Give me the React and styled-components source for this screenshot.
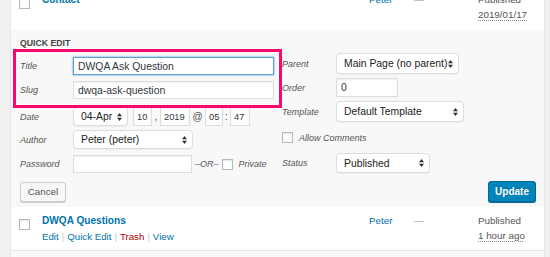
import React from "react";
import styled, { createGlobalStyle } from "styled-components";

const GlobalStyle = createGlobalStyle`
  html, body {
    margin: 0;
    padding: 0;
    background: #f1f1f1;
    font-family: "Liberation Sans", Arial, sans-serif;
    color: #32373c;
  }
  * {
    box-sizing: border-box;
  }
`;

const Viewport = styled.div`
  width: 550px;
  height: 257px;
  overflow: hidden;
  padding: 0 5px 0 10px;
`;

const Table = styled.div`
  background: #fff;
  border-left: 1px solid #e5e5e5;
  border-right: 1px solid #e5e5e5;
`;

const PostRow = styled.div`
  display: grid;
  grid-template-columns: 31px 327px 45px 64px 1fr;
  height: ${(p) => p.$h || 44}px;
  background: ${(p) => (p.$alt ? "#f9f9f9" : "#fff")};
  border-bottom: ${(p) => (p.$line ? "1px solid #e5e5e5" : "none")};
`;

const ScrolledRow = styled(PostRow)`
  margin-top: -14px;
`;

const CheckCell = styled.div`
  padding: 9px 0 0 8px;
`;

const Check = styled.span`
  display: inline-block;
  width: 11px;
  height: 11px;
  border: 1px solid #b4b9be;
  background: #fff;
  box-shadow: inset 0 1px 2px rgba(0, 0, 0, 0.1);
  flex: none;
`;

const TitleCell = styled.div`
  padding-top: 7px;
`;

const PostTitle = styled.a`
  display: block;
  font-size: 10.1px;
  font-weight: bold;
  line-height: 14px;
  color: #0073aa;
  text-decoration: none;
`;

const RowActions = styled.div`
  margin-top: 2px;
  font-size: 9.7px;
  line-height: 14px;
  color: #ddd;
`;

const ActionLink = styled.a`
  color: ${(p) => (p.$danger ? "#a00" : "#0073aa")};
  text-decoration: none;
`;

const Pipe = styled.span`
  color: #ccc;
  margin: 0 3px;
`;

const TextCell = styled.div`
  padding-top: 6px;
  font-size: 9.8px;
  line-height: 15px;
  color: ${(p) => p.$color || "#555"};
`;

const When = styled.abbr`
  text-decoration: underline dotted #888;
  text-underline-offset: 2px;
`;

const QuickEdit = styled.div`
  background: #f8f8f8;
  padding: 7px 8px 5px 9px;
`;

const Heading = styled.div`
  font-size: 8.7px;
  font-weight: bold;
  line-height: 12px;
  color: #444;
  text-transform: uppercase;
`;

const Columns = styled.div`
  display: flex;
  gap: 8px;
  margin-top: 4px;
`;

const LeftCol = styled.div`
  width: 254px;
  padding-top: 4px;
`;

const RightCol = styled.div`
  flex: 1;
`;

const Highlight = styled.div`
  position: relative;
  margin-bottom: 8px;

  &::after {
    content: "";
    position: absolute;
    top: -8px;
    left: -7px;
    right: -8px;
    bottom: -9px;
    border: 3px solid #f7086c;
    pointer-events: none;
  }
`;

const Field = styled.div`
  display: flex;
  align-items: center;
  height: ${(p) => p.$h}px;
  margin-bottom: ${(p) => p.$mb || 0}px;
`;

const Label = styled.span`
  width: ${(p) => p.$w || 53}px;
  flex: none;
  font-size: 9px;
  font-style: italic;
  color: #555;
`;

const TextInput = styled.input`
  width: ${(p) => p.$w}px;
  height: 100%;
  margin: 0;
  padding: ${(p) => (p.$small ? "0 2px 0 3px" : "0 4px")};
  font-family: inherit;
  font-size: ${(p) => (p.$small ? "9.3px" : "10.4px")};
  color: #32373c;
  background: #fff;
  border: 1px solid ${(p) => (p.$focus ? "#5b9dd9" : "#ddd")};
  box-shadow: ${(p) =>
    p.$focus
      ? "0 0 2px rgba(30, 140, 190, 0.8)"
      : "inset 0 1px 2px rgba(0, 0, 0, 0.07)"};
  border-radius: 0;
  outline: none;
  flex: none;
`;

const SelectBox = styled.div`
  width: ${(p) => p.$w}px;
  height: 100%;
  display: flex;
  align-items: center;
  justify-content: space-between;
  padding: 0 5px 0 7px;
  font-size: 10.4px;
  color: #222;
  background: #fff;
  border: 1px solid #dcdcdc;
  border-radius: 4px;
  box-shadow: 0 1px 1px rgba(0, 0, 0, 0.05);
  flex: none;
  white-space: nowrap;
`;

const Joint = styled.span`
  width: ${(p) => p.$w}px;
  flex: none;
  text-align: center;
  font-size: 10px;
  color: #555;
`;

const Aside = styled.span`
  margin: 0 3px;
  font-size: 9px;
  font-style: italic;
  color: #555;
`;

const CheckLabel = styled.span`
  margin-left: 6px;
  font-size: 9px;
  font-style: italic;
  color: #555;
`;

const ButtonRow = styled.div`
  display: flex;
  align-items: center;
  justify-content: space-between;
  margin-top: 8px;
`;

const CancelButton = styled.button`
  width: 46px;
  height: 20px;
  padding: 0;
  font-family: inherit;
  font-size: 9.8px;
  color: #555;
  background: #f7f7f7;
  border: 1px solid #ccc;
  border-radius: 3px;
  box-shadow: 0 1px 0 #ccc;
`;

const UpdateButton = styled.button`
  width: 48px;
  height: 21px;
  padding: 0;
  font-family: inherit;
  font-size: 10px;
  font-weight: bold;
  color: #fff;
  background: #0085ba;
  border: 1px solid #006799;
  border-radius: 3px;
  box-shadow: 0 1px 0 #006799;
  text-shadow: 0 -1px 1px #006799;
`;

function Arrows() {
  return (
    <svg width="5" height="8" viewBox="0 0 5 8">
      <polygon points="0,3.2 2.5,0 5,3.2" fill="#333" />
      <polygon points="0,4.8 2.5,8 5,4.8" fill="#333" />
    </svg>
  );
}

function Select({ w, children }) {
  return (
    <SelectBox $w={w}>
      <span>{children}</span>
      <Arrows />
    </SelectBox>
  );
}

function ListRow({ title, when, line, scrolled, actions }) {
  const Row = scrolled ? ScrolledRow : PostRow;
  return (
    <Row $line={line}>
      <CheckCell>
        <Check />
      </CheckCell>
      <TitleCell>
        <PostTitle href="#">{title}</PostTitle>
        {actions && (
          <RowActions>
            <ActionLink href="#">Edit</ActionLink>
            <Pipe>|</Pipe>
            <ActionLink href="#">Quick Edit</ActionLink>
            <Pipe>|</Pipe>
            <ActionLink href="#" $danger>Trash</ActionLink>
            <Pipe>|</Pipe>
            <ActionLink href="#">View</ActionLink>
          </RowActions>
        )}
      </TitleCell>
      <TextCell $color="#0073aa">Peter</TextCell>
      <TextCell $color="#8a8f94">—</TextCell>
      <TextCell>
        Published
        <br />
        <When>{when}</When>
      </TextCell>
    </Row>
  );
}

export default function App() {
  return (
    <>
      <GlobalStyle />
      <Viewport>
        <Table>
          <ListRow title="Contact" when="2019/01/17" scrolled />

          <QuickEdit>
            <Heading>Quick Edit</Heading>
            <Columns>
              <LeftCol>
                <Highlight>
                  <Field $h={18} $mb={6}>
                    <Label>Title</Label>
                    <TextInput $w={201} $focus defaultValue="DWQA Ask Question" />
                  </Field>
                  <Field $h={18}>
                    <Label>Slug</Label>
                    <TextInput $w={201} defaultValue="dwqa-ask-question" />
                  </Field>
                </Highlight>
                <Field $h={19} $mb={4}>
                  <Label>Date</Label>
                  <Select w={55}>04-Apr</Select>
                  <Joint $w={5} />
                  <TextInput $small $w={19} defaultValue="10" />
                  <Joint $w={8}>,</Joint>
                  <TextInput $small $w={30} defaultValue="2019" />
                  <Joint $w={15}>@</Joint>
                  <TextInput $small $w={18} defaultValue="05" />
                  <Joint $w={7}>:</Joint>
                  <TextInput $small $w={20} defaultValue="47" />
                </Field>
                <Field $h={19} $mb={6}>
                  <Label>Author</Label>
                  <Select w={120}>Peter (peter)</Select>
                </Field>
                <Field $h={18}>
                  <Label>Password</Label>
                  <TextInput $w={119} defaultValue="" />
                  <Aside>–OR–</Aside>
                  <Check />
                  <CheckLabel>Private</CheckLabel>
                </Field>
              </LeftCol>

              <RightCol>
                <Field $h={21} $mb={4}>
                  <Label $w={54}>Parent</Label>
                  <Select w={123}>Main Page (no parent)</Select>
                </Field>
                <Field $h={19} $mb={4}>
                  <Label $w={54}>Order</Label>
                  <TextInput $w={62} defaultValue="0" />
                </Field>
                <Field $h={21} $mb={5}>
                  <Label $w={54}>Template</Label>
                  <Select w={128}>Default Template</Select>
                </Field>
                <Field $h={21} $mb={5}>
                  <Check />
                  <CheckLabel>Allow Comments</CheckLabel>
                </Field>
                <Field $h={20}>
                  <Label $w={54}>Status</Label>
                  <Select w={94}>Published</Select>
                </Field>
              </RightCol>
            </Columns>

            <ButtonRow>
              <CancelButton>Cancel</CancelButton>
              <UpdateButton>Update</UpdateButton>
            </ButtonRow>
          </QuickEdit>

          <ListRow title="DWQA Questions" when="1 hour ago" line actions />
          <PostRow $alt />
        </Table>
      </Viewport>
    </>
  );
}
